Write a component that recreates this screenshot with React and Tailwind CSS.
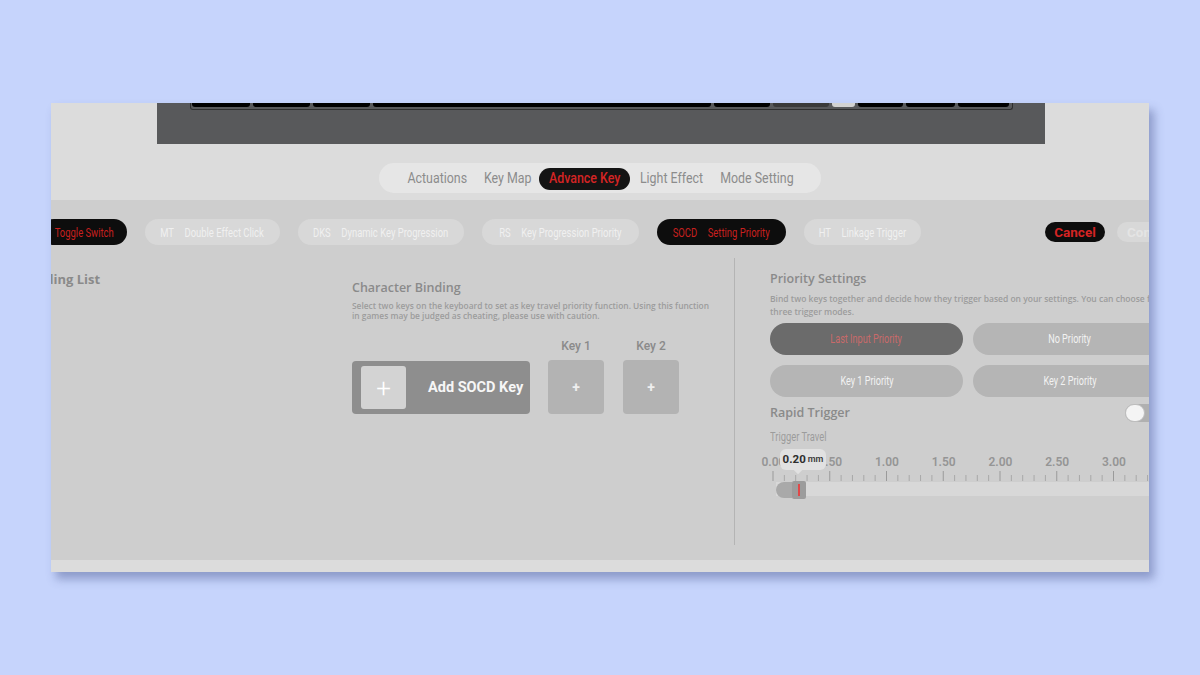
import React from "react";

const roboto = { fontFamily: 'Roboto, "Liberation Sans", sans-serif' };

function C({ children, s = "scale-x-[0.72]", o = "origin-center" }) {
  return <span className={`inline-block whitespace-nowrap ${o} ${s}`} style={roboto}>{children}</span>;
}

function Keys() {
  const keys = [
    { w: 58, c: "bg-black" },
    { w: 57, c: "bg-black" },
    { w: 57, c: "bg-black" },
    { w: 338, c: "bg-black" },
    { w: 56, c: "bg-black" },
    { w: 56, c: "bg-[#3a3a3a]" },
    { w: 23, c: "bg-[#d2d2d2]" },
    { w: 45, c: "bg-black" },
    { w: 49, c: "bg-black" },
    { w: 51, c: "bg-black" },
  ];
  return (
    <div className="ml-[33px] flex h-[7px] w-[823px] gap-[3px] rounded-b-[3px] border border-t-0 border-[#2e2e2e] px-[1px]">
      {keys.map((k, i) => (
        <div key={i} className={`h-[4px] rounded-b-[3px] ${k.c}`} style={{ width: k.w }} />
      ))}
    </div>
  );
}

function Ticks() {
  const lines = [];
  for (let i = 0; i <= 36; i++) {
    const x = 5 + i * 11.35;
    const major = i % 5 === 0;
    lines.push(
      <line key={i} x1={x} x2={x} y1={major ? 0 : 4} y2={10} stroke={major ? "#9a9a9a" : "#a8a8a8"} strokeWidth="1" />
    );
  }
  return (
    <svg width="400" height="11" className="block">
      {lines}
    </svg>
  );
}

export default function App() {
  const modes = [
    { a: null, t: "Toggle Switch", w: 86, active: true },
    { a: "MT", t: "Double Effect Click", w: 135 },
    { a: "DKS", t: "Dynamic Key Progression", w: 166 },
    { a: "RS", t: "Key Progression Priority", w: 157 },
    { a: "SOCD", t: "Setting Priority", w: 129, active: true },
    { a: "HT", t: "Linkage Trigger", w: 117 },
  ];
  const labels = ["0.00", "0.50", "1.00", "1.50", "2.00", "2.50", "3.00"];
  return (
    <div className="h-[675px] w-[1200px] overflow-hidden bg-[#c6d4fc] pl-[51px] pt-[103px]" style={{ fontFamily: '"Open Sans", "Noto Sans", sans-serif' }}>
      <div className="flex h-[469px] w-[1098px] flex-col overflow-hidden bg-[#cecece] shadow-[5px_7px_9px_rgba(70,85,140,0.45)]">
        {/* top */}
        <div className="h-[97px] shrink-0 bg-[#dcdcdc]">
          <div className="ml-[106px] h-[41px] w-[888px] bg-[#58595b]">
            <Keys />
          </div>
          <div className="mt-[19px] flex justify-center">
            <div className="flex h-[30px] items-center rounded-full bg-[#e6e6e6] pl-[29px] pr-[29px] pt-[1px] text-[15.5px] text-[#8c8c8c]">
              <div className="flex w-[59px] justify-center"><C s="scale-x-[0.8]">Actuations</C></div>
              <div className="ml-[18px] flex w-[45px] justify-center"><C s="scale-x-[0.8]">Key Map</C></div>
              <div className="ml-[9px] flex h-[22px] w-[91px] items-center justify-center rounded-full bg-[#141414] font-medium text-[#d42424]"><C s="scale-x-[0.8]">Advance Key</C></div>
              <div className="ml-[9px] flex w-[64px] justify-center"><C s="scale-x-[0.8]">Light Effect</C></div>
              <div className="ml-[18px] flex w-[71px] justify-center"><C s="scale-x-[0.8]">Mode Setting</C></div>
            </div>
          </div>
        </div>

        {/* bottom */}
        <div className="flex flex-1 flex-col pt-[19px]">
          <div className="ml-[-10px] flex h-[26px] shrink-0 items-center gap-[18px] text-[13.5px]">
            {modes.map((m, i) => (
              <div
                key={i}
                className={`flex h-[26px] shrink-0 items-center justify-center whitespace-nowrap rounded-full ${m.active ? "bg-[#0d0d0d] text-[#c8201f]" : "bg-[#d8d8d8] text-[#f0f0f0]"}`}
                style={{ width: m.w }}
              >
                <C s="scale-x-[0.7]">
                  {m.a && <span className="mr-[15px]">{m.a}</span>}
                  {m.t}
                </C>
              </div>
            ))}
            <div className="ml-[106px] flex h-[20px] w-[60px] shrink-0 items-center justify-center rounded-full bg-[#0d0d0d] pt-[1px] text-[13.5px] font-bold text-[#d42424]" style={roboto}>
              Cancel
            </div>
            <div className="ml-[-6px] flex h-[20px] w-[70px] shrink-0 items-center rounded-full bg-[#d8d8d8] pl-[10px] pt-[1px] text-[13.5px] font-bold text-[#e4e4e4]" style={roboto}>
              Confirm
            </div>
          </div>

          <div className="flex flex-1">
            {/* left */}
            <div className="w-[301px] shrink-0">
              <div className="ml-[-27px] mt-[25px] text-[13px] font-bold leading-[18px] text-[#8a8a8a]">Binding List</div>
            </div>

            {/* middle */}
            <div className="w-[382px] shrink-0 pt-[35px]">
              <div className="text-[12.5px] font-semibold leading-[16px] text-[#8a8a8a]">Character Binding</div>
              <div className="mt-[5px] whitespace-nowrap text-[8.4px] font-semibold leading-[10px] text-[#9c9c9c]">
                Select two keys on the keyboard to set as key travel priority function. Using this function
                <br />
                in games may be judged as cheating, please use with caution.
              </div>
              <div className="mt-[17px] flex items-end" style={roboto}>
                <div className="flex h-[53px] w-[178px] items-center rounded-[4px] bg-[#8e8e8e] pl-[9px]">
                  <div className="flex h-[43px] w-[45px] items-center justify-center rounded-[3px] bg-[#d3d3d3] text-[26px] font-light leading-none text-white">+</div>
                  <div className="ml-[22px] text-[14.5px] font-bold text-[#f6f6f6]">Add SOCD Key</div>
                </div>
                <div className="ml-[18px] flex w-[56px] flex-col items-center">
                  <div className="text-[12px] font-medium leading-[16px] text-[#8a8a8a]">Key 1</div>
                  <div className="mt-[6px] flex h-[54px] w-[56px] items-center justify-center rounded-[4px] bg-[#b3b3b3] text-[14px] font-bold text-[#eeeeee]">+</div>
                </div>
                <div className="ml-[19px] flex w-[56px] flex-col items-center">
                  <div className="text-[12px] font-medium leading-[16px] text-[#8a8a8a]">Key 2</div>
                  <div className="mt-[6px] flex h-[54px] w-[56px] items-center justify-center rounded-[4px] bg-[#b3b3b3] text-[14px] font-bold text-[#eeeeee]">+</div>
                </div>
              </div>
            </div>

            {/* divider */}
            <div className="mt-[13px] h-[287px] w-px shrink-0 bg-[#b4b4b4]" />

            {/* right */}
            <div className="shrink-0 pl-[35px] pt-[26px]">
              <div className="text-[12.5px] font-semibold leading-[16px] text-[#8a8a8a]">Priority Settings</div>
              <div className="mt-[5px] whitespace-nowrap text-[8.5px] font-semibold leading-[13px] text-[#9c9c9c]">
                Bind two keys together and decide how they trigger based on your settings. You can choose from
                <br />
                three trigger modes.
              </div>
              <div className="mt-[5px] grid w-[396px] grid-cols-2 gap-[10px] text-[13px]">
                <div className="flex h-[32px] items-center justify-center rounded-full bg-[#6b6b6b] text-[#c86a6a]"><C s="scale-x-[0.7]">Last Input Priority</C></div>
                <div className="flex h-[32px] items-center justify-center rounded-full bg-[#b5b5b5] text-[#f2f2f2]"><C s="scale-x-[0.7]">No Priority</C></div>
                <div className="flex h-[32px] items-center justify-center rounded-full bg-[#b5b5b5] text-[#f2f2f2]"><C s="scale-x-[0.7]">Key 1 Priority</C></div>
                <div className="flex h-[32px] items-center justify-center rounded-full bg-[#b5b5b5] text-[#f2f2f2]"><C s="scale-x-[0.7]">Key 2 Priority</C></div>
              </div>
              <div className="mt-[7px] flex h-[18px] w-[400px] items-center justify-between">
                <div className="text-[12.5px] font-semibold text-[#8a8a8a]">Rapid Trigger</div>
                <div className="flex h-[18px] w-[45px] items-center rounded-full bg-[#b0b0b0]">
                  <div className="h-[18px] w-[20px] rounded-full border border-[#bdbdbd] bg-[#f4f4f4]" />
                </div>
              </div>
              <div className="mt-[8px] h-[14px] text-[12px] leading-[14px] text-[#9c9c9c]"><C s="scale-x-[0.78]" o="origin-left">Trigger Travel</C></div>
              <div className="relative mt-[10px] w-[400px]">
                <div className="ml-[-25px] flex text-[12px] font-semibold leading-[16px] text-[#959595]" style={roboto}>
                  {labels.map((l) => (
                    <div key={l} className="w-[56.75px] shrink-0 text-center">{l}</div>
                  ))}
                </div>
                <div className="ml-[-2px] mt-[1px]">
                  <Ticks />
                </div>
                <div className="ml-[6px] h-[14px] w-[400px] bg-[#d8d8d8]" />
                <div className="absolute left-[6px] top-[27px] flex h-[18px] items-center">
                  <div className="h-[16px] w-[16px] rounded-l-full bg-[#a9a9a9]" />
                  <div className="flex h-[18px] w-[14px] items-center justify-center rounded-[2px] bg-[#9c9c9c]">
                    <div className="h-[12px] w-[2px] bg-[#e04848]" />
                  </div>
                </div>
                <div className="absolute left-[10px] top-[-5px] flex h-[21px] w-[46px] items-center justify-center gap-[2px] rounded-[6px] bg-[#e1e1e1]" style={roboto}>
                  <span className="text-[11.5px] font-bold text-[#2e2e2e]">0.20</span>
                  <span className="text-[9px] font-semibold text-[#3a3a3a]">mm</span>
                  <div className="absolute bottom-[-3px] left-[15px] h-[6px] w-[6px] rotate-45 bg-[#e1e1e1]" />
                </div>
              </div>
            </div>
          </div>
        </div>
        <div className="h-[12px] shrink-0 bg-[#dcdcdc]" />
      </div>
    </div>
  );
}
